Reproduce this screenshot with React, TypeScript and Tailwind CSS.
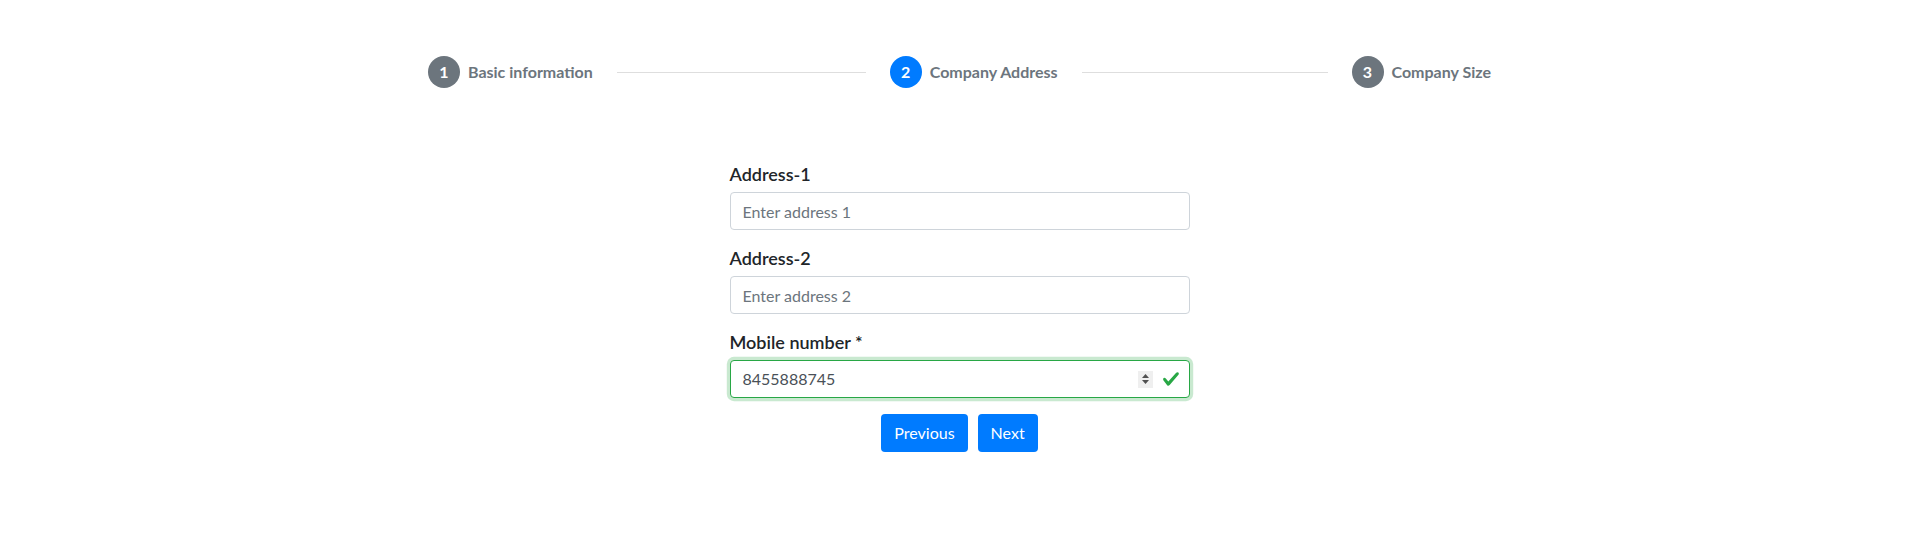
const steps = [
    { num: 1, label: "Basic information", active: false },
    { num: 2, label: "Company Address", active: true },
    { num: 3, label: "Company Size", active: false },
]

function StepTrigger({ num, label, active }: { num: number; label: string; active: boolean }) {
    return (
        <div className="flex items-center gap-2 py-5">
            <span className={`flex h-8 w-8 items-center justify-center rounded-full text-base font-bold text-white ${active ? "bg-[#007bff]" : "bg-[#6c757d]"}`}>
                {num}
            </span>
            <span className="text-base font-bold text-[#6c757d]">{label}</span>
        </div>
    )
}

function Field({ label, placeholder }: { label: string; placeholder: string }) {
    return (
        <div className="mb-4">
            <label className="mb-[6px] block text-[18px] leading-6 font-semibold text-[#212529]">{label}</label>
            <input
                type="text"
                placeholder={placeholder}
                className="block h-[38px] w-full rounded border border-[#ced4da] bg-white px-3 text-base text-[#495057] placeholder:text-[#6c757d] outline-none"
            />
        </div>
    )
}

export default function App() {
    return (
        <div className="min-h-[546px] w-full bg-white pt-9" style={{ fontFamily: "Lato, 'Liberation Sans', sans-serif" }}>
            <div className="mx-auto flex w-[1063px] items-center">
                {steps.map((step, index) => (
                    <div key={step.num} className={`flex items-center ${index < steps.length - 1 ? "flex-1" : ""}`}>
                        <StepTrigger {...step} />
                        {index < steps.length - 1 && (
                            <div className="mx-6 h-px flex-1 bg-[#dedede]"></div>
                        )}
                    </div>
                ))}
            </div>

            <div className="mx-auto mt-[54px] w-[460px]">
                <Field label="Address-1" placeholder="Enter address 1" />
                <Field label="Address-2" placeholder="Enter address 2" />
                <div className="mb-4">
                    <label className="mb-[6px] block text-[18px] leading-6 font-semibold text-[#212529]">Mobile number *</label>
                    <div className="relative flex h-[38px] w-full items-center rounded border border-[#28a745] bg-white px-3 shadow-[0_0_0_3.2px_rgba(40,167,69,0.25)]">
                        <span className="flex-1 text-base text-[#495057]">8455888745</span>
                        <span className="mr-[9px] flex h-[17px] w-[15px] flex-col items-center justify-center gap-[2px] bg-[#efefef]">
                            <svg width="7" height="4" viewBox="0 0 7 4"><path d="M3.5 0L7 4H0z" fill="#505050" /></svg>
                            <svg width="7" height="4" viewBox="0 0 7 4"><path d="M0 0h7L3.5 4z" fill="#505050" /></svg>
                        </span>
                        <svg width="18" height="18" viewBox="0 0 8 8" className="-mr-[3px]">
                            <path fill="#28a745" d="M2.3 6.73L.6 4.53c-.4-1.04.46-1.4 1.1-.8l1.1 1.4 3.4-3.8c.6-.63 1.6-.27 1.2.7l-4 4.6c-.43.5-.8.4-1.1.1z" />
                        </svg>
                    </div>
                </div>
                <div className="flex justify-center gap-[10px]">
                    <button className="h-[38px] rounded bg-[#007bff] px-[13px] text-base text-white">Previous</button>
                    <button className="h-[38px] rounded bg-[#007bff] px-[13px] text-base text-white">Next</button>
                </div>
            </div>
        </div>
    )
}
